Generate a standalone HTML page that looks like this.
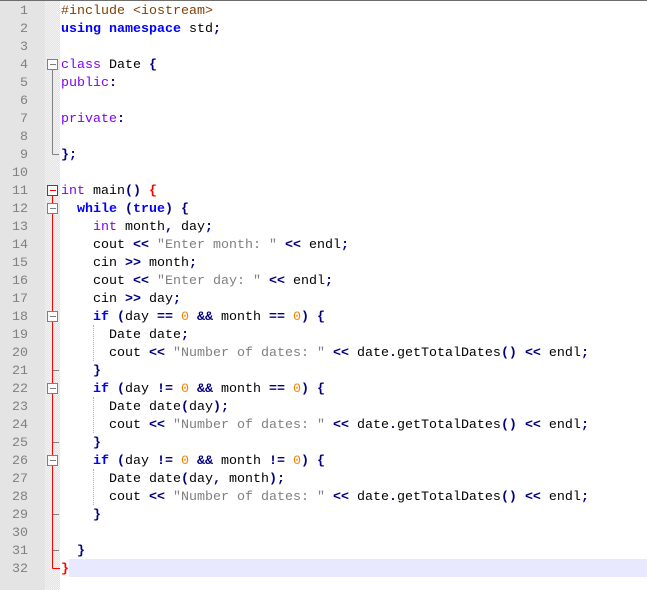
<!DOCTYPE html>
<html><head><meta charset="utf-8"><style>
body{margin:0;width:647px;height:590px;background:#fff;overflow:hidden;position:relative;font-family:"Liberation Mono",monospace;font-size:13.33px}
.top{position:absolute;left:0;top:0;width:647px;height:1px;background:#6d6d6d}
.nums{position:absolute;left:0;top:1px;width:45px;height:589px;background:#e4e4e4}
.fold{position:absolute;left:45px;top:1px;width:15px;height:589px;background-color:#f3f3f3;background-image:linear-gradient(45deg,#e4e4e4 25%,transparent 25%,transparent 75%,#e4e4e4 75%),linear-gradient(45deg,#e4e4e4 25%,transparent 25%,transparent 75%,#e4e4e4 75%);background-size:2px 2px;background-position:0 0,1px 1px}
.ln{position:absolute;left:0;width:28px;text-align:right;color:#808080;height:18px;line-height:18px;margin-top:2px}
.l{position:absolute;left:61px;height:18px;line-height:18px;white-space:pre;color:#000;margin-top:2px}
.k{color:#0000ff;font-weight:bold}.t{color:#8000ff}.p{color:#804000}.n{color:#ff8000}.s{color:#808080}.o{color:#000080;font-weight:bold}.r{color:#ff0000;font-weight:bold}
.hl{position:absolute;left:69px;top:559px;width:578px;height:18px;background:#e8e8ff}
.g{position:absolute;width:0;border-left:1px dotted #b0b0b0;height:18px}
</style></head><body>
<div class="top"></div>
<div class="nums"></div>
<div class="fold"></div>
<div class="hl"></div>
<svg style="position:absolute;left:0;top:0" width="647" height="590">
<g fill="none" shape-rendering="crispEdges">
<line x1="52.5" y1="70" x2="52.5" y2="154.5" stroke="#808080"/>
<line x1="52.5" y1="154.5" x2="59" y2="154.5" stroke="#808080"/>
<rect x="47.5" y="59.5" width="10" height="10" fill="#fff" stroke="#808080"/>
<line x1="50" y1="64.5" x2="56" y2="64.5" stroke="#808080"/>
<line x1="52.5" y1="196" x2="52.5" y2="568.5" stroke="#ff0000"/>
<line x1="52.5" y1="568.5" x2="60" y2="568.5" stroke="#ff0000"/>
<line x1="53" y1="370.5" x2="59" y2="370.5" stroke="#808080"/>
<line x1="53" y1="442.5" x2="59" y2="442.5" stroke="#808080"/>
<line x1="53" y1="514.5" x2="59" y2="514.5" stroke="#808080"/>
<line x1="53" y1="550.5" x2="59" y2="550.5" stroke="#808080"/>
<rect x="47.5" y="185.5" width="10" height="10" fill="#fff" stroke="#ff0000"/>
<line x1="50" y1="190.5" x2="56" y2="190.5" stroke="#ff0000"/>
<rect x="47.5" y="203.5" width="10" height="10" fill="#fff" stroke="#808080"/>
<line x1="50" y1="208.5" x2="56" y2="208.5" stroke="#808080"/>
<rect x="47.5" y="311.5" width="10" height="10" fill="#fff" stroke="#808080"/>
<line x1="50" y1="316.5" x2="56" y2="316.5" stroke="#808080"/>
<rect x="47.5" y="383.5" width="10" height="10" fill="#fff" stroke="#808080"/>
<line x1="50" y1="388.5" x2="56" y2="388.5" stroke="#808080"/>
<rect x="47.5" y="455.5" width="10" height="10" fill="#fff" stroke="#808080"/>
<line x1="50" y1="460.5" x2="56" y2="460.5" stroke="#808080"/>
</g></svg>
<div class="g" style="left:93px;top:325px;height:36px"></div>
<div class="g" style="left:93px;top:397px;height:36px"></div>
<div class="g" style="left:93px;top:469px;height:36px"></div>
<div class="ln" style="top:1px">1</div><div class="ln" style="top:19px">2</div><div class="ln" style="top:37px">3</div><div class="ln" style="top:55px">4</div><div class="ln" style="top:73px">5</div><div class="ln" style="top:91px">6</div><div class="ln" style="top:109px">7</div><div class="ln" style="top:127px">8</div><div class="ln" style="top:145px">9</div><div class="ln" style="top:163px">10</div><div class="ln" style="top:181px">11</div><div class="ln" style="top:199px">12</div><div class="ln" style="top:217px">13</div><div class="ln" style="top:235px">14</div><div class="ln" style="top:253px">15</div><div class="ln" style="top:271px">16</div><div class="ln" style="top:289px">17</div><div class="ln" style="top:307px">18</div><div class="ln" style="top:325px">19</div><div class="ln" style="top:343px">20</div><div class="ln" style="top:361px">21</div><div class="ln" style="top:379px">22</div><div class="ln" style="top:397px">23</div><div class="ln" style="top:415px">24</div><div class="ln" style="top:433px">25</div><div class="ln" style="top:451px">26</div><div class="ln" style="top:469px">27</div><div class="ln" style="top:487px">28</div><div class="ln" style="top:505px">29</div><div class="ln" style="top:523px">30</div><div class="ln" style="top:541px">31</div><div class="ln" style="top:559px">32</div>
<div class="l" style="top:1px"><span class="p">#include &lt;iostream&gt;</span></div>
<div class="l" style="top:19px"><span class="k">using namespace</span> std<span class="o">;</span></div>
<div class="l" style="top:55px"><span class="t">class</span> Date <span class="o">{</span></div>
<div class="l" style="top:73px"><span class="t">public</span><span class="o">:</span></div>
<div class="l" style="top:109px"><span class="t">private</span><span class="o">:</span></div>
<div class="l" style="top:145px"><span class="o">};</span></div>
<div class="l" style="top:181px"><span class="t">int</span> main<span class="o">()</span> <span class="r">{</span></div>
<div class="l" style="top:199px">  <span class="k">while</span> <span class="o">(</span><span class="k">true</span><span class="o">)</span> <span class="o">{</span></div>
<div class="l" style="top:217px">    <span class="t">int</span> month<span class="o">,</span> day<span class="o">;</span></div>
<div class="l" style="top:235px">    cout <span class="o">&lt;&lt;</span> <span class="s">"Enter month: "</span> <span class="o">&lt;&lt;</span> endl<span class="o">;</span></div>
<div class="l" style="top:253px">    cin <span class="o">&gt;&gt;</span> month<span class="o">;</span></div>
<div class="l" style="top:271px">    cout <span class="o">&lt;&lt;</span> <span class="s">"Enter day: "</span> <span class="o">&lt;&lt;</span> endl<span class="o">;</span></div>
<div class="l" style="top:289px">    cin <span class="o">&gt;&gt;</span> day<span class="o">;</span></div>
<div class="l" style="top:307px">    <span class="k">if</span> <span class="o">(</span>day <span class="o">==</span> <span class="n">0</span> <span class="o">&amp;&amp;</span> month <span class="o">==</span> <span class="n">0</span><span class="o">)</span> <span class="o">{</span></div>
<div class="l" style="top:325px">      Date date<span class="o">;</span></div>
<div class="l" style="top:343px">      cout <span class="o">&lt;&lt;</span> <span class="s">"Number of dates: "</span> <span class="o">&lt;&lt;</span> date<span class="o">.</span>getTotalDates<span class="o">()</span> <span class="o">&lt;&lt;</span> endl<span class="o">;</span></div>
<div class="l" style="top:361px">    <span class="o">}</span></div>
<div class="l" style="top:379px">    <span class="k">if</span> <span class="o">(</span>day <span class="o">!=</span> <span class="n">0</span> <span class="o">&amp;&amp;</span> month <span class="o">==</span> <span class="n">0</span><span class="o">)</span> <span class="o">{</span></div>
<div class="l" style="top:397px">      Date date<span class="o">(</span>day<span class="o">);</span></div>
<div class="l" style="top:415px">      cout <span class="o">&lt;&lt;</span> <span class="s">"Number of dates: "</span> <span class="o">&lt;&lt;</span> date<span class="o">.</span>getTotalDates<span class="o">()</span> <span class="o">&lt;&lt;</span> endl<span class="o">;</span></div>
<div class="l" style="top:433px">    <span class="o">}</span></div>
<div class="l" style="top:451px">    <span class="k">if</span> <span class="o">(</span>day <span class="o">!=</span> <span class="n">0</span> <span class="o">&amp;&amp;</span> month <span class="o">!=</span> <span class="n">0</span><span class="o">)</span> <span class="o">{</span></div>
<div class="l" style="top:469px">      Date date<span class="o">(</span>day<span class="o">,</span> month<span class="o">);</span></div>
<div class="l" style="top:487px">      cout <span class="o">&lt;&lt;</span> <span class="s">"Number of dates: "</span> <span class="o">&lt;&lt;</span> date<span class="o">.</span>getTotalDates<span class="o">()</span> <span class="o">&lt;&lt;</span> endl<span class="o">;</span></div>
<div class="l" style="top:505px">    <span class="o">}</span></div>
<div class="l" style="top:541px">  <span class="o">}</span></div>
<div class="l" style="top:559px"><span class="r">}</span></div>
</body></html>
